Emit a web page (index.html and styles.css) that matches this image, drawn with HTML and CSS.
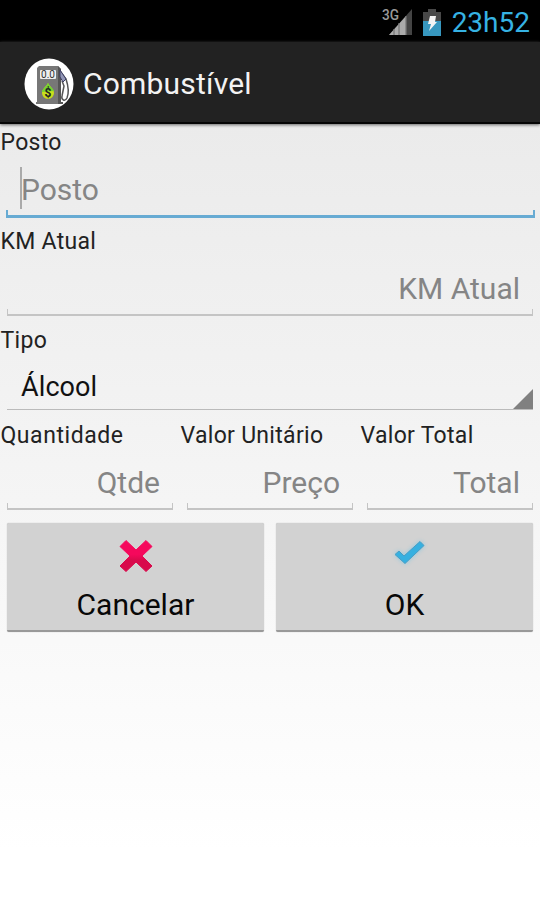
FILE: index.html
```
<!DOCTYPE html>
<html lang="pt-BR">
<head>
<meta charset="utf-8">
<title>Combustível</title>
<link rel="stylesheet" href="styles.css">
</head>
<body>
<header class="status">
  <svg class="signal" width="32" height="30" viewBox="0 0 32 30">
    <path d="M30 1V27H7Z" fill="#444"/>
    <path d="M24 8V27H7Z" fill="#aaa"/>
    <path d="M12 21v6M17 15v12M24 8v19" stroke="#777" stroke-width="1.3"/>
    <text class="network" x="0" y="12" textLength="17" lengthAdjust="spacingAndGlyphs">3G</text>
  </svg>
  <svg class="battery" width="18" height="27" viewBox="0 0 18 27">
    <path d="M5 0h8v3h5v9H0V3h5Z" fill="#484848"/>
    <path d="M0 12h18v15H0Z" fill="#3797bf"/>
    <path d="M7 7h6l-1 6h2L6 22l2-7H5Z" fill="#f4f4f4"/>
  </svg>
  <span class="clock">23h52</span>
</header>
<div class="appbar">
  <svg class="logo" width="50" height="52" viewBox="0 0 50 52">
    <ellipse cx="25" cy="26" rx="24.5" ry="25.5" fill="#fff"/>
    <path d="M15 8h19l3 3v33h2v2H12v-2h1V10Z" fill="#777"/>
    <path d="M34 8l3 3v33h2v2h-5Z" fill="#555"/>
    <rect x="16" y="12" width="16" height="9" rx="1" fill="#eee"/>
    <text class="meter" x="17" y="20" textLength="14" lengthAdjust="spacingAndGlyphs">0.0</text>
    <path d="M24 25c2 4 6 6 6 10a6 6 0 0 1-12 0c0-4 4-6 6-10Z" fill="#c9df1b"/>
    <path d="M24 25c2 4 5 5 6 8l-12 1c0-3 4-5 6-9Z" fill="#75d52f"/>
    <text class="dollar" x="24" y="38.500" text-anchor="middle">$</text>
    <path d="M36 13l6 8c2 6 3 14 1 19-2 4-6 2-5-2l2-10-2-5" fill="none" stroke="#555" stroke-width="1.5"/>
    <path d="M36 12l6 9-3 3-3-5Z" fill="#9296b6" stroke="#3b3c62"/>
  </svg>
  <h1>Combustível</h1>
</div>
<main>
  <div class="label"><span>Posto</span></div>
  <div class="field focused"><div class="hint left"><i class="cursor"></i><span>Posto</span></div><div class="line"></div></div>
  <div class="label"><span>KM Atual</span></div>
  <div class="field"><div class="hint"><span>KM Atual</span></div><div class="line"></div></div>
  <div class="label"><span>Tipo</span></div>
  <div class="spinner">
    <span>Álcool</span>
    <svg width="20" height="20" viewBox="0 0 20 20"><path d="M20 0V20H0Z" fill="#808080"/></svg>
  </div>
  <div class="columns">
    <div><div class="label wide"><span>Quantidade</span></div><div class="field"><div class="hint"><span>Qtde</span></div><div class="line"></div></div></div>
    <div><div class="label"><span>Valor Unitário</span></div><div class="field"><div class="hint"><span>Preço</span></div><div class="line"></div></div></div>
    <div><div class="label"><span>Valor Total</span></div><div class="field"><div class="hint"><span>Total</span></div><div class="line"></div></div></div>
  </div>
  <div class="buttons">
    <button type="button">
      <svg width="34" height="34" viewBox="0 0 34 34">
        <defs><linearGradient id="red" x2="0" y2="1"><stop offset=".45" stop-color="#f5085c"/><stop offset=".65" stop-color="#d80a4b"/></linearGradient></defs>
        <path d="M7 1.500L17 11 27 1.500 33 7.500 23 17 33 27 27 32.500 17 23 7 32.500 1 27 11 17 1 7.500Z" fill="url(#red)" stroke="url(#red)" stroke-linejoin="round"/>
      </svg>
      <span>Cancelar</span>
    </button>
    <button type="button">
      <svg class="check" width="42" height="34" viewBox="0 0 42 34">
        <path d="M12 12l5 5L33 2.500 37 6.500 18 24.500 8 15.500Z" fill="#36b0e0" stroke="#4a9dc4" stroke-linejoin="round"/>
      </svg>
      <span>OK</span>
    </button>
  </div>
</main>
</body>
</html>
```
FILE: styles.css
```
* { box-sizing: border-box; }
body {
  margin: 0;
  height: 900px;
  overflow: hidden;
  font-family: Roboto, sans-serif;
  color: #222;
  background: linear-gradient(#ebebeb 124px, #f3f3f3 430px, #fff 850px);
}
.status {
  height: 42px;
  background: #000;
  display: flex;
  justify-content: flex-end;
  align-items: flex-start;
  padding: 8px 10px 0 0;
}
.signal { margin-right: 9px; }
.network { font-size: 14px; font-weight: 500; fill: #999; }
.battery { margin: 1px 11px 0 0; }
.clock { font-size: 28px; line-height: 30px; color: #36b2e3; }
.appbar {
  height: 82px;
  background: #222;
  border-bottom: 2px solid #050505;
  box-shadow: 0 1px 3px #666;
  display: flex;
  align-items: center;
  padding: 3px 0 0 24px;
}
.logo { margin-right: 9px; }
.meter { font-size: 10px; fill: #333; }
.dollar { font-size: 12px; font-weight: 700; fill: #222; }
h1 { margin: 0; font-size: 30px; font-weight: 400; color: #f3f3f3; letter-spacing: .2px; }
.label { height: 35px; line-height: 38px; padding-left: .5px; font-size: 23px; letter-spacing: .3px; white-space: nowrap; }
.label.wide { letter-spacing: .55px; }
.field { height: 64px; padding: 0 6px; display: flex; flex-direction: column; }
.hint {
  height: 51px;
  padding: 10px 14px 0 14px;
  display: flex;
  align-items: center;
  justify-content: flex-end;
  font-size: 30px;
  color: #858585;
}
.hint.left { justify-content: flex-start; }
.cursor { width: 2px; height: 42px; background: #aaa; margin: -4px -1px 0 0; }
.line { height: 7px; margin: 0 1px; border: 1px solid #c4c4c4; border-bottom-width: 2px; border-top: 0; }
.focused .line { height: 8px; margin: 0 -1px 0 0; border-color: #67abd3; border-width: 0 2px 3px; }
.spinner {
  height: 53px;
  margin: 0 7px;
  padding-left: 14px;
  border-bottom: 1px solid #bbb;
  display: flex;
  justify-content: space-between;
  align-items: flex-end;
  font-size: 27px;
  letter-spacing: .1px;
  color: #111;
}
.spinner span { line-height: 44px; }
.columns { display: grid; grid-template-columns: repeat(3, 1fr); padding-top: 7px; }
.buttons { display: grid; grid-template-columns: 1fr 1fr; gap: 12px; padding: 7px 7px 0 7px; }
button {
  height: 109px;
  padding: 16px 0 0;
  border: 0;
  border-bottom: 2px solid #999;
  border-radius: 2px;
  background: #d2d2d2;
  box-shadow: 0 0 1px #aaa;
  display: flex;
  flex-direction: column;
  align-items: center;
  font: 30px/36px Roboto, sans-serif;
  color: #080808;
}
button span { margin-top: 14px; }
.check { margin-left: 7px; filter: drop-shadow(0 0 2px #8bc8e0); }
```
